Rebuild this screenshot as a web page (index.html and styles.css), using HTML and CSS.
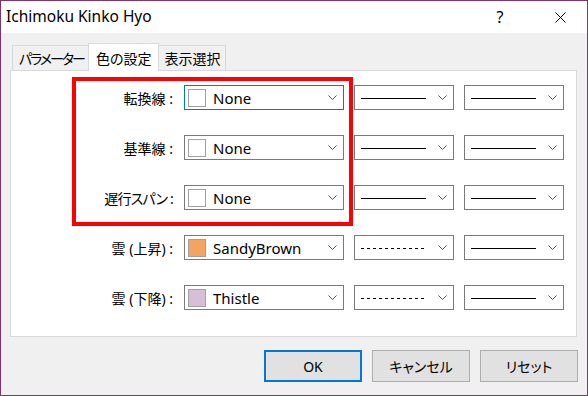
FILE: index.html
```html
<!DOCTYPE html>
<html lang="ja">
<head>
    <meta charset="UTF-8">
    <title>Ichimoku Kinko Hyo</title>
    <link rel="stylesheet" href="styles.css">
</head>
<body>
    <div class="window">
        <div class="titlebar">
            <span class="title">Ichimoku Kinko Hyo</span>
            <span class="cap-btn help">?</span>
            <span class="cap-btn close">
                <svg width="11" height="11" viewBox="0 0 11 11"><path d="M0.5 0.5 L10.5 10.5 M10.5 0.5 L0.5 10.5" stroke="#000" stroke-width="1" fill="none"/></svg>
            </span>
        </div>

        <div class="body">
            <div class="tabs">
                <div class="tab tight">パラメーター</div>
                <div class="tab active">色の設定</div>
                <div class="tab">表示選択</div>
            </div>

            <div class="panel">
                <div class="grid">
                    <div class="label">転換線 :</div>
                    <div class="combo focus"><span class="swatch"></span><span class="value">None</span><svg class="chev" width="9" height="5" viewBox="0 0 9 5"><polyline points="0.5,0.5 4.5,4.5 8.5,0.5"/></svg></div>
                    <div class="combo line"><span class="stroke"></span><svg class="chev" width="9" height="5" viewBox="0 0 9 5"><polyline points="0.5,0.5 4.5,4.5 8.5,0.5"/></svg></div>
                    <div class="combo line"><span class="stroke"></span><svg class="chev" width="9" height="5" viewBox="0 0 9 5"><polyline points="0.5,0.5 4.5,4.5 8.5,0.5"/></svg></div>

                    <div class="label">基準線 :</div>
                    <div class="combo"><span class="swatch"></span><span class="value">None</span><svg class="chev" width="9" height="5" viewBox="0 0 9 5"><polyline points="0.5,0.5 4.5,4.5 8.5,0.5"/></svg></div>
                    <div class="combo line"><span class="stroke"></span><svg class="chev" width="9" height="5" viewBox="0 0 9 5"><polyline points="0.5,0.5 4.5,4.5 8.5,0.5"/></svg></div>
                    <div class="combo line"><span class="stroke"></span><svg class="chev" width="9" height="5" viewBox="0 0 9 5"><polyline points="0.5,0.5 4.5,4.5 8.5,0.5"/></svg></div>

                    <div class="label kana">遅行スパン :</div>
                    <div class="combo"><span class="swatch"></span><span class="value">None</span><svg class="chev" width="9" height="5" viewBox="0 0 9 5"><polyline points="0.5,0.5 4.5,4.5 8.5,0.5"/></svg></div>
                    <div class="combo line"><span class="stroke"></span><svg class="chev" width="9" height="5" viewBox="0 0 9 5"><polyline points="0.5,0.5 4.5,4.5 8.5,0.5"/></svg></div>
                    <div class="combo line"><span class="stroke"></span><svg class="chev" width="9" height="5" viewBox="0 0 9 5"><polyline points="0.5,0.5 4.5,4.5 8.5,0.5"/></svg></div>

                    <div class="label">雲 (上昇) :</div>
                    <div class="combo"><span class="swatch sandy"></span><span class="value">SandyBrown</span><svg class="chev" width="9" height="5" viewBox="0 0 9 5"><polyline points="0.5,0.5 4.5,4.5 8.5,0.5"/></svg></div>
                    <div class="combo line"><span class="stroke dashed"></span><svg class="chev" width="9" height="5" viewBox="0 0 9 5"><polyline points="0.5,0.5 4.5,4.5 8.5,0.5"/></svg></div>
                    <div class="combo line"><span class="stroke"></span><svg class="chev" width="9" height="5" viewBox="0 0 9 5"><polyline points="0.5,0.5 4.5,4.5 8.5,0.5"/></svg></div>

                    <div class="label">雲 (下降) :</div>
                    <div class="combo"><span class="swatch thistle"></span><span class="value">Thistle</span><svg class="chev" width="9" height="5" viewBox="0 0 9 5"><polyline points="0.5,0.5 4.5,4.5 8.5,0.5"/></svg></div>
                    <div class="combo line"><span class="stroke dashed"></span><svg class="chev" width="9" height="5" viewBox="0 0 9 5"><polyline points="0.5,0.5 4.5,4.5 8.5,0.5"/></svg></div>
                    <div class="combo line"><span class="stroke"></span><svg class="chev" width="9" height="5" viewBox="0 0 9 5"><polyline points="0.5,0.5 4.5,4.5 8.5,0.5"/></svg></div>
                </div>
                <!-- annotation box over the first three rows -->
                <div class="highlight"></div>
            </div>

            <div class="buttons">
                <button class="btn default">OK</button>
                <button class="btn">キャンセル</button>
                <button class="btn">リセット</button>
            </div>
        </div>
    </div>
</body>
</html>
```

FILE: styles.css
```css
body {
    margin: 0;
    font-family: "Noto Sans", "Noto Sans CJK JP", sans-serif;
    font-size: 14px;
    color: #000;
    background: #fff;
}
.window {
    width: 588px;
    height: 396px;
    box-sizing: border-box;
    border: 1px solid #883366;
    background: #f0f0f0;
}
.titlebar {
    height: 32px;
    background: #fff;
    display: flex;
    align-items: center;
    padding: 0 15px 0 5px;
}
.title {
    flex: 1;
    font-size: 15.5px;
    line-height: 1;
}
.cap-btn {
    width: 24px;
    display: flex;
    justify-content: center;
    font-size: 16px;
}
.help {
    margin-right: 2px;
}
.cap-btn.close {
    margin-left: 34px;
}
.body {
    padding: 10px 9px 0 9px;
}
.tabs {
    display: flex;
    align-items: flex-end;
    height: 27px;
    padding-left: 2px;
}
.tab {
    height: 25px;
    box-sizing: border-box;
    border: 1px solid #d9d9d9;
    border-bottom: none;
    padding: 0 5px;
    display: flex;
    align-items: center;
    font-family: "Noto Sans CJK JP", sans-serif;
    font-feature-settings: "palt";
    font-size: 14px;
    background: #f0f0f0;
}
.tab.tight {
    padding: 0 4px 0 6px;
    letter-spacing: -2px;
}
.tab + .tab {
    margin-left: -1px;
}
.tab.active {
    height: 28px;
    margin-bottom: -1px;
    background: #fff;
    padding: 0 7px;
    position: relative;
    z-index: 1;
}
.panel {
    position: relative;
    height: 267px;
    box-sizing: border-box;
    border: 1px solid #d9d9d9;
    background: #fff;
    margin-right: 1px;
}
.grid {
    display: grid;
    grid-template-columns: 163px 160px 100px 100px;
    grid-auto-rows: 25px;
    column-gap: 10px;
    row-gap: 25px;
    padding-top: 14px;
}
.label {
    display: flex;
    align-items: center;
    justify-content: flex-end;
    padding-right: 1px;
    font-family: "Noto Sans", "Noto Sans CJK JP", sans-serif;
    font-feature-settings: "palt";
    white-space: pre;
}
.label.kana {
    letter-spacing: -0.8px;
}
.combo {
    display: flex;
    align-items: center;
    box-sizing: border-box;
    border: 1px solid #7a7a7a;
    background: #fff;
    padding: 0 6px 0 3px;
}
.combo.focus {
    border-color: #0078d7;
}
.swatch {
    width: 18px;
    height: 18px;
    box-sizing: border-box;
    border: 1px solid #a0a0a0;
    background: #fff;
    margin-right: 7px;
}
.swatch.sandy {
    background: #f4a460;
}
.swatch.thistle {
    background: #d8bfd8;
}
.value {
    flex: 1;
    font-size: 15px;
    line-height: 1;
    padding-top: 1px;
}
.chev {
    fill: none;
    stroke: #555;
    stroke-width: 1;
}
.combo.line {
    padding-left: 6px;
}
.stroke {
    width: 65px;
    height: 1px;
    background: #000;
    margin-right: auto;
    margin-top: 1px;
}
.stroke.dashed {
    background: repeating-linear-gradient(to right, #000 0 3px, transparent 3px 6px);
}
.highlight {
    position: absolute;
    left: 61px;
    top: 6px;
    width: 281px;
    height: 149px;
    box-sizing: border-box;
    border: 4px solid #f00;
}
.buttons {
    display: flex;
    justify-content: flex-end;
    gap: 10px;
    margin-top: 13px;
}
.btn {
    width: 98px;
    height: 32px;
    box-sizing: border-box;
    border: 1px solid #adadad;
    background: #e1e1e1;
    font-family: "Noto Sans", "Noto Sans CJK JP", sans-serif;
    font-feature-settings: "palt";
    font-size: 14px;
    color: #000;
    padding: 0;
}
.btn.default {
    border: 2px solid #0078d7;
}
```
